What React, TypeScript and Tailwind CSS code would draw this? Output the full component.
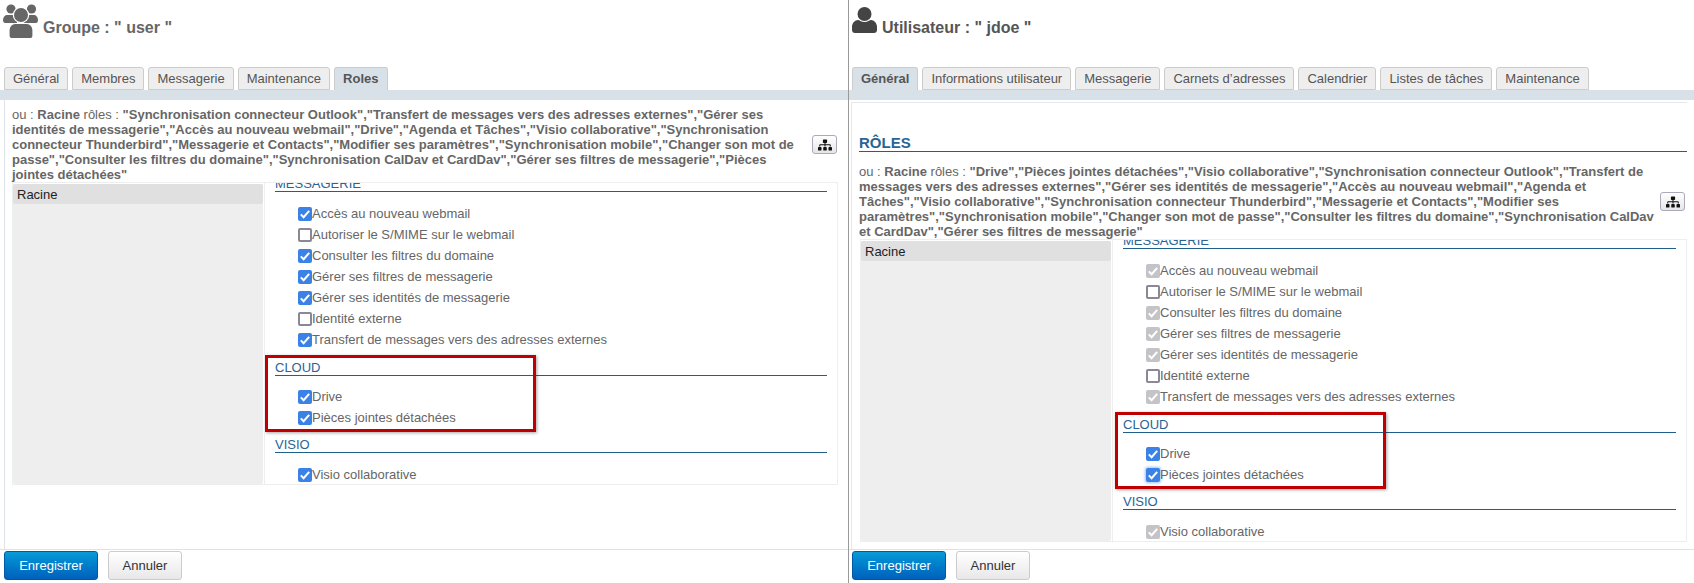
import React from 'react';
import { FaSitemap } from 'react-icons/fa';

type BoxState = 'checked' | 'inherited' | 'focused' | 'empty';

const UsersIcon = () => (
  <svg viewBox="0 0 36 36" className="h-[36px] w-[36px] shrink-0 text-[#666]" fill="currentColor">
    <circle cx="8" cy="6" r="4.6" />
    <circle cx="28.5" cy="6" r="4.6" />
    <path d="M0 17c0-3 2-5 4-5h7c2 0 3 2 3 4v4H2c-1 0-2-1-2-3Z" />
    <path d="M35 17c0-3-2-5-4-5h-7c-2 0-3 2-3 4v4h12c1 0 2-1 2-3Z" />
    <circle cx="18" cy="12" r="7.6" stroke="white" strokeWidth="1.2" />
    <path d="M6 27c0-4 3-6.5 6-6.5h12c3 0 6 2.500 6 6.500v6c0 1.500-1 2.500-2.500 2.500h-19C7 35.500 6 34.500 6 33Z" stroke="white" strokeWidth="1.2" />
  </svg>
);

const UserIcon = () => (
  <svg viewBox="0 0 25 26" className="h-[26px] w-[25px] shrink-0 text-[#444]" fill="currentColor">
    <circle cx="12.500" cy="7" r="7" />
    <path d="M0 20c0-4 3-7 6-7 1.500 0 3 2 6.500 2s5-2 6.500-2c3 0 6 3 6 7v3c0 1.700-1.300 3-3 3H3c-1.700 0-3-1.300-3-3Z" />
  </svg>
);

const Check = ({ state }: { state: BoxState }) => {
  if (state === 'empty') {
    return <span className="box-border h-[14px] w-[14px] shrink-0 rounded-[2px] border-2 border-[#8a8896] bg-white" />;
  }
  const color = state === 'inherited' ? 'bg-[#c4c4c8]' : 'bg-[#3b82e6]';
  return (
    <span className={`flex h-[14px] w-[14px] shrink-0 items-center justify-center rounded-[2px] ${color} ${state === 'focused' ? 'shadow-[0_0_3px_1px_#9cc2f2]' : ''}`}>
      <svg viewBox="0 0 14 14" className="h-[14px] w-[14px]">
        <path d="M2.8 7.400 5.600 10.200 11.200 3.800" fill="none" stroke="white" strokeWidth="2" />
      </svg>
    </span>
  );
};

const Row = ({ label, state }: { label: string; state: BoxState }) => (
  <div className="flex h-[21px] items-center pl-[23px] text-[13px] text-[#666]">
    <Check state={state} />
    <span>{label}</span>
  </div>
);

const SectionTitle = ({ children }: { children: React.ReactNode }) => (
  <div className="h-[16px] border-b border-[#1f5f8b] text-[13px] leading-[15px] text-[#2a6496]">{children}</div>
);

const RoleTree = ({ inherited }: { inherited: boolean }) => {
  const on: BoxState = inherited ? 'inherited' : 'checked';
  return (
    <div className={`flex h-[303px] border border-[#eee] ${inherited ? 'ml-px' : ''}`}>
      <div className="mt-px h-[300px] w-[250px] shrink-0 rounded-[2px] bg-[#eee]">
        <div className="h-[20px] rounded-[2px] bg-[#e0e0e0] pl-[4px] text-[13px] leading-[21px] text-[#222]">Racine</div>
      </div>
      <div className="ml-px min-w-0 flex-1 overflow-hidden border-l border-[#eee] pl-[10px] pr-[10px]">
        <div className="-mt-[7px]">
          <SectionTitle>MESSAGERIE</SectionTitle>
          <div className="pt-[11px]">
            <Row label="Accès au nouveau webmail" state={on} />
            <Row label="Autoriser le S/MIME sur le webmail" state="empty" />
            <Row label="Consulter les filtres du domaine" state={on} />
            <Row label="Gérer ses filtres de messagerie" state={on} />
            <Row label="Gérer ses identités de messagerie" state={on} />
            <Row label="Identité externe" state="empty" />
            <Row label="Transfert de messages vers des adresses externes" state={on} />
          </div>
          <div className="relative mt-[10px]">
            <SectionTitle>CLOUD</SectionTitle>
            <div className="pt-[10px]">
              <Row label="Drive" state="checked" />
              <Row label="Pièces jointes détachées" state={inherited ? 'focused' : 'checked'} />
            </div>
            <div className={`absolute -top-[5px] h-[77px] w-[271px] border-[3px] border-[#c00000] shadow-[1px_1px_3px_rgba(0,0,0,0.35)] ${inherited ? '-left-[8px]' : '-left-[10px]'}`} />
          </div>
          <div className="mt-[9px]">
            <SectionTitle>VISIO</SectionTitle>
            <div className="pt-[11px]">
              <Row label="Visio collaborative" state={on} />
            </div>
          </div>
        </div>
      </div>
    </div>
  );
};

const Tabs = ({ tabs, active, className }: { tabs: string[]; active: string; className: string }) => (
  <div className={`flex h-[23px] items-end gap-[4px] ${className}`}>
    {tabs.map((t) => (
      <div
        key={t}
        className={
          t === active
            ? 'h-[23px] rounded-t-[3px] border border-b-0 border-[#ccc] bg-[#d9e1e8] px-[8px] text-[13px] font-bold leading-[22px] text-[#555]'
            : 'h-[23px] rounded-t-[3px] border border-[#ccc] bg-[#eee] px-[8px] text-[13px] leading-[22px] text-[#555]'
        }
      >
        {t}
      </div>
    ))}
  </div>
);

const OrgButton = () => (
  <button className="flex h-[19px] w-[25px] shrink-0 items-center justify-center rounded-[3px] border border-[#aab] bg-gradient-to-b from-white to-[#e6e6e6] text-[#111]">
    <FaSitemap size={14} />
  </button>
);

const Footer = ({ className }: { className: string }) => (
  <div className={`flex gap-[10px] border-t border-[#dde3e8] pt-px ${className}`}>
    <button className="h-[29px] w-[94px] rounded-[3px] border border-[#0058a8] bg-gradient-to-b from-[#0a9ad8] to-[#0060bc] text-[13px] text-white">Enregistrer</button>
    <button className="h-[29px] w-[74px] rounded-[3px] border border-[#ccc] bg-gradient-to-b from-white to-[#e8e8e8] text-[13px] text-[#333]">Annuler</button>
  </div>
);

const Summary = ({ children }: { children: React.ReactNode }) => (
  <p className="w-[797px] shrink-0 text-[13px] leading-[15px] text-[#666]">{children}</p>
);

export default function App() {
  return (
    <div className="flex h-[583px] w-[1694px] overflow-hidden bg-white font-['Liberation_Sans',Arial,sans-serif]">
      {/* groupe */}
      <div className="flex h-full w-[849px] shrink-0 flex-col border-r border-[#999]">
        <div className="flex h-[67px] items-start pl-[3px] pt-[3px]">
          <UsersIcon />
          <span className="ml-[4px] mt-[15px] text-[16px] font-bold leading-[20px] text-[#666]">Groupe : " user "</span>
        </div>
        <Tabs tabs={['Général', 'Membres', 'Messagerie', 'Maintenance', 'Roles']} active="Roles" className="pl-[4px]" />
        <div className="h-[10px] bg-[#d9e1e8]" />
        <div className="ml-[4px] flex flex-1 flex-col border-l border-[#dde3e8] pl-[7px] pr-[10px] pt-[7px]">
          <div className="flex items-center">
            <Summary>
              ou : <b>Racine</b> rôles : <b>"Synchronisation connecteur Outlook","Transfert de messages vers des adresses externes","Gérer ses identités de messagerie","Accès au nouveau webmail","Drive","Agenda et Tâches","Visio collaborative","Synchronisation connecteur Thunderbird","Messagerie et Contacts","Modifier ses paramètres","Synchronisation mobile","Changer son mot de passe","Consulter les filtres du domaine","Synchronisation CalDav et CardDav","Gérer ses filtres de messagerie","Pièces jointes détachées"</b>
            </Summary>
            <div className="ml-[3px]">
              <OrgButton />
            </div>
          </div>
          <RoleTree inherited={false} />
        </div>
        <Footer className="pl-[4px]" />
        <div className="h-[3px]" />
      </div>

      {/* utilisateur */}
      <div className="flex h-full min-w-0 flex-1 flex-col">
        <div className="flex h-[67px] items-start pl-[3px] pt-[7px]">
          <UserIcon />
          <span className="ml-[5px] mt-[11px] text-[16px] font-bold leading-[20px] text-[#555]">Utilisateur : " jdoe "</span>
        </div>
        <Tabs
          tabs={['Général', 'Informations utilisateur', 'Messagerie', 'Carnets d’adresses', 'Calendrier', 'Listes de tâches', 'Maintenance']}
          active="Général"
          className="pl-[3px]"
        />
        <div className="h-[10px] bg-[#d9e1e8]" />
        <div className="ml-[2px] mr-[7px] mt-[2px] flex flex-1 flex-col border-l border-t border-[#e4e9ed] pl-[7px]">
          <h2 className="mt-[31px] h-[18px] border-b border-[#1f5f8b] text-[15px] font-bold leading-[17px] text-[#2a6496]">RÔLES</h2>
          <div className="mt-[12px] flex items-center">
            <Summary>
              ou : <b>Racine</b> rôles : <b>"Drive","Pièces jointes détachées","Visio collaborative","Synchronisation connecteur Outlook","Transfert de messages vers des adresses externes","Gérer ses identités de messagerie","Accès au nouveau webmail","Agenda et Tâches","Visio collaborative","Synchronisation connecteur Thunderbird","Messagerie et Contacts","Modifier ses paramètres","Synchronisation mobile","Changer son mot de passe","Consulter les filtres du domaine","Synchronisation CalDav et CardDav","Gérer ses filtres de messagerie"</b>
            </Summary>
            <div className="ml-auto mr-[2px]">
              <OrgButton />
            </div>
          </div>
          <RoleTree inherited />
        </div>
        <Footer className="pl-[3px]" />
        <div className="h-[3px]" />
      </div>
    </div>
  );
}
